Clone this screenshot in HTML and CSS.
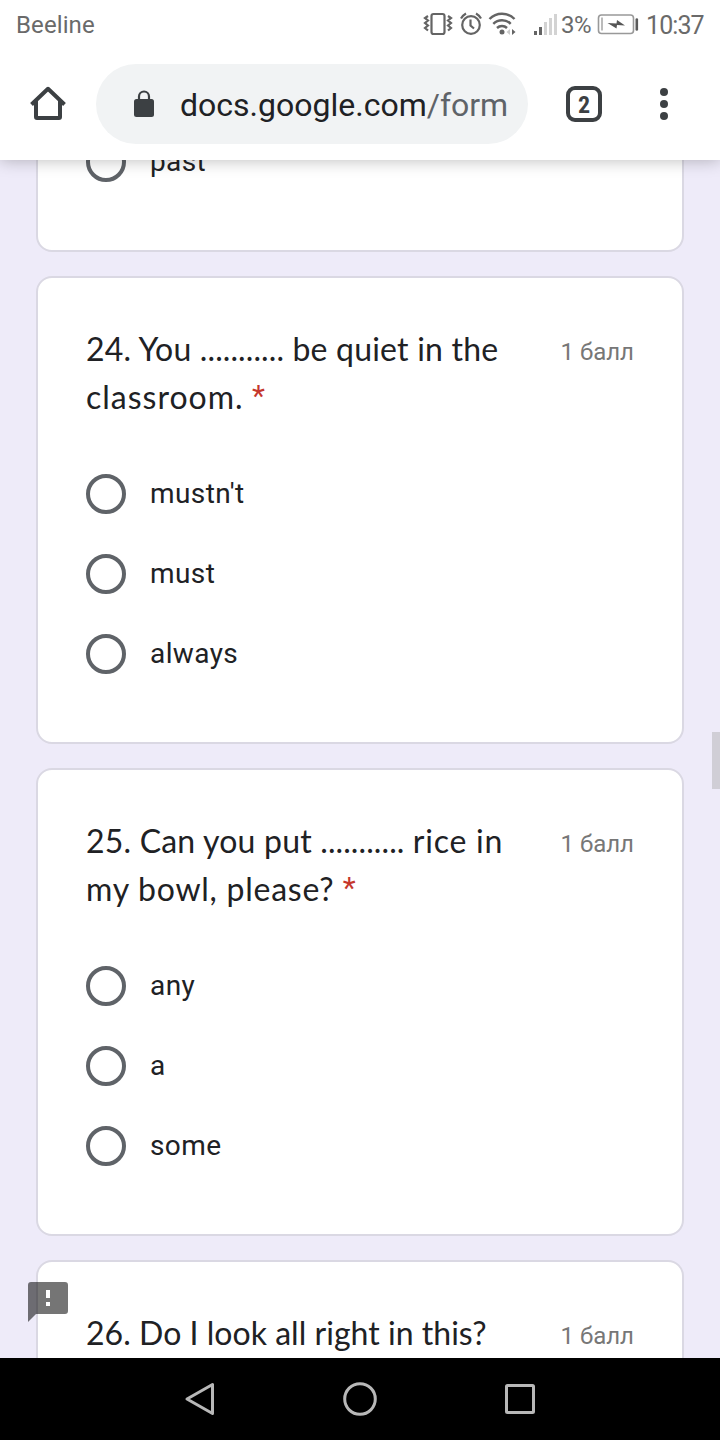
FILE: index.html
```html
<!DOCTYPE html>
<html lang="ru">
<head>
	<meta charset="UTF-8">
	<title>Form</title>
	<link rel="stylesheet" href="styles.css">
</head>
<body>
	<div class="status">
		<span class="carrier">Beeline</span>
		<svg class="status-icons" width="136" height="48" viewBox="0 0 136 48" fill="none" stroke="#646464">
			<!-- vibrate -->
			<rect x="8.5" y="14" width="13" height="20" rx="2" stroke-width="2.2"/>
			<path d="M5 16l-3 2 3 2.500-3 2.500 3 2.500-3 2.500 3 2.500M25 16l3 2-3 2.500 3 2.500-3 2.500 3 2.500-3 2.500" stroke-width="2.200"/>
			<!-- alarm -->
			<circle cx="48" cy="25" r="8.800" stroke-width="2.200"/>
			<path d="M47.500 19.500v6l3.500 3M38 18.500a13 13 0 0 1 5-5M58 18.500a13 13 0 0 0-5-5" stroke-width="2.200"/>
			<!-- wifi -->
			<path d="M66.500 19a17.500 17.500 0 0 1 25 0M70.300 23.800a12.500 12.500 0 0 1 17.400 0M74 28a7.500 7.500 0 0 1 10 0" stroke-width="2.500"/>
			<circle cx="79" cy="32" r="2.500" fill="#646464" stroke="none"/>
			<path d="M87 29v6l-3.500-3z" fill="#ccc" stroke="none"/>
			<path d="M89 29v6l3.500-3z" fill="#646464" stroke="none"/>
			<!-- signal -->
			<path d="M112.500 35v-4M117.500 35v-8" stroke-width="3"/>
			<path d="M122.500 35v-13M127.500 35v-17M132.500 35v-21" stroke="#d3d3d3" stroke-width="3"/>
		</svg>
		<span class="percent">3%</span>
		<svg class="battery" width="42" height="48" viewBox="0 0 42 48">
			<rect x="1.500" y="15" width="35" height="18.500" rx="3" fill="none" stroke="#999" stroke-width="1.600"/>
			<path d="M5 17.500v13" stroke="#bbb" stroke-width="2"/>
			<path d="M10.500 23l9 .5.500-3.500L28 25.500l-8-.5-.5 3.500z" fill="#555"/>
			<path d="M39.800 19.500v10" stroke="#5a5a5a" stroke-width="2.600" stroke-linecap="round"/>
		</svg>
		<span class="clock">10:37</span>
	</div>

	<div class="toolbar">
		<svg class="home" width="40" height="40" viewBox="0 0 40 40" fill="none" stroke="#3c4043" stroke-width="4" stroke-linejoin="round">
			<path d="M3.500 20.500L20 4.800l16.500 15.700"/>
			<path d="M8 17v16a1 1 0 0 0 1 1h22a1 1 0 0 0 1-1V17"/>
		</svg>
		<div class="url">
			<svg width="20" height="28" viewBox="0 0 20 28">
				<path d="M5 10V6.500a5 5 0 0 1 10 0V10" fill="none" stroke="#3c4043" stroke-width="2.200"/>
				<rect y="9" width="20" height="18" rx="2.500" fill="#3c4043"/>
			</svg>
			<span class="address">docs.google.com<span class="path">/form</span></span>
		</div>
		<div class="tabs">2</div>
		<svg class="more" width="8" height="32" viewBox="0 0 8 32" fill="#3c4043">
			<circle cx="4" cy="4" r="4"/>
			<circle cx="4" cy="16" r="4"/>
			<circle cx="4" cy="28" r="4"/>
		</svg>
	</div>

	<div class="page">
		<div class="feed">
			<div class="card">
				<div class="option"><span class="radio"></span><span class="label">past</span></div>
			</div>

			<div class="card">
				<div class="question">
					<div class="title">24. You <span class="dots">...........</span> be quiet in the<br><span class="wide">classroom.</span> <span class="req">*</span></div>
					<div class="points">1 балл</div>
				</div>
				<div class="option"><span class="radio"></span><span class="label">mustn't</span></div>
				<div class="option"><span class="radio"></span><span class="label">must</span></div>
				<div class="option"><span class="radio"></span><span class="label">always</span></div>
			</div>

			<div class="card">
				<div class="question">
					<div class="title">25. Can you put <span class="dots">...........</span> <span class="loose">rice in</span><br><span class="loose">my bowl, please?</span> <span class="req">*</span></div>
					<div class="points">1 балл</div>
				</div>
				<div class="option"><span class="radio"></span><span class="label">any</span></div>
				<div class="option"><span class="radio"></span><span class="label">a</span></div>
				<div class="option"><span class="radio"></span><span class="label">some</span></div>
			</div>

			<div class="card">
				<div class="question">
					<div class="title"><span class="tight">26. Do I look all right in this?</span></div>
					<div class="points">1 балл</div>
				</div>
			</div>
		</div>
		<div class="scrollbar"></div>
		<svg class="report" width="40" height="40" viewBox="0 0 40 40">
			<path d="M3 0h34a3 3 0 0 1 3 3v26a3 3 0 0 1-3 3H8l-8 8V3a3 3 0 0 1 3-3z" fill="#000" fill-opacity=".54"/>
			<path d="M18 8h4v8h-4zM18 20h4v4h-4z" fill="#fff"/>
		</svg>
	</div>

	<div class="navbar">
		<svg width="32" height="36" viewBox="0 0 32 36"><path d="M3 18L28.500 3.500v29z"/></svg>
		<svg width="36" height="36" viewBox="0 0 36 36"><circle cx="18" cy="18" r="15.300"/></svg>
		<svg width="32" height="32" viewBox="0 0 32 32"><rect x="2.500" y="2.500" width="27" height="27" rx="1"/></svg>
	</div>
</body>
</html>
```
FILE: styles.css
```css
* {
	box-sizing: border-box;
}
body {
	margin: 0;
	width: 720px;
	height: 1440px;
	overflow: hidden;
	display: flex;
	flex-direction: column;
	background-color: #fff;
	font-family: Roboto, sans-serif;
	color: #202124;
}
svg {
	display: block;
	flex: none;
}

.status {
	height: 48px;
	flex: none;
	display: flex;
	align-items: center;
	padding: 0 15px 0 16px;
	position: relative;
	z-index: 2;
	background-color: #fff;
	color: #6a6a6a;
}
.carrier {
	padding-top: 2px;
	font-size: 24px;
	letter-spacing: 0.1px;
}
.status-icons {
	margin-left: auto;
}
.percent {
	width: 31px;
	margin-left: 2px;
	margin-right: 5px;
	padding-top: 2px;
	font-size: 24px;
	letter-spacing: -0.5px;
}
.clock {
	width: 59px;
	margin-left: 7px;
	padding-top: 2px;
	font-size: 25px;
	letter-spacing: -0.9px;
}

.toolbar {
	height: 112px;
	flex: none;
	display: flex;
	align-items: center;
	padding: 0 52px 0 28px;
	position: relative;
	z-index: 1;
	background-color: #fff;
	box-shadow: 0 0 16px rgba(0, 0, 0, 0.28);
}
.url {
	width: 432px;
	height: 80px;
	margin-left: 28px;
	border-radius: 40px;
	background-color: #f1f3f4;
	display: flex;
	align-items: center;
	padding-left: 38px;
}
.address {
	margin-left: 26px;
	padding-top: 2px;
	font-size: 32px;
	white-space: nowrap;
}
.path {
	color: #5f6368;
}
.tabs {
	width: 36px;
	height: 36px;
	margin-left: 38px;
	border: 4px solid #3c4043;
	border-radius: 9px;
	font: bold 24px/30px "Roboto Condensed", Roboto, sans-serif;
	text-align: center;
	color: #3c4043;
}
.more {
	margin-left: auto;
}

.page {
	flex: 1;
	position: relative;
	overflow: hidden;
	background-color: #eeebf9;
}
.feed {
	display: flex;
	flex-direction: column;
	gap: 24px;
	padding: 0 36px;
	margin-top: -88px;
}
.card {
	padding: 48px;
	border: 2px solid #dad8e3;
	border-radius: 16px;
	background-color: #fff;
}
.question {
	display: flex;
	justify-content: space-between;
	height: 96px;
	margin-bottom: 32px;
}
.title {
	margin-top: -1px;
	font: 32px/48px Lato, sans-serif;
	letter-spacing: 0.2px;
	white-space: nowrap;
}
.dots {
	letter-spacing: 0.1px;
}
.wide {
	letter-spacing: 1px;
}
.loose {
	letter-spacing: 0.75px;
}
.tight {
	letter-spacing: 0.03px;
}
.req {
	color: #c5372c;
	font-family: Roboto, sans-serif;
	font-size: 30px;
	line-height: 0;
	vertical-align: 3px;
}
.points {
	font-size: 24px;
	line-height: 52px;
	color: #777;
}
.option {
	height: 80px;
	display: flex;
	align-items: center;
}
.radio {
	width: 40px;
	height: 40px;
	margin-right: 24px;
	border: 4px solid #5f6368;
	border-radius: 50%;
}
.label {
	padding-bottom: 2px;
	font-size: 28px;
	letter-spacing: 0.4px;
}

.scrollbar {
	position: absolute;
	right: 0;
	top: 572px;
	width: 8px;
	height: 57px;
	background-color: #d0ced6;
}
.report {
	position: absolute;
	left: 28px;
	bottom: 36px;
}

.navbar {
	height: 82px;
	flex: none;
	display: flex;
	justify-content: space-between;
	align-items: center;
	padding: 0 184px;
	background-color: #000;
}
.navbar svg {
	fill: none;
	stroke: #b8b8b8;
	stroke-width: 3;
	stroke-linejoin: round;
}
```
